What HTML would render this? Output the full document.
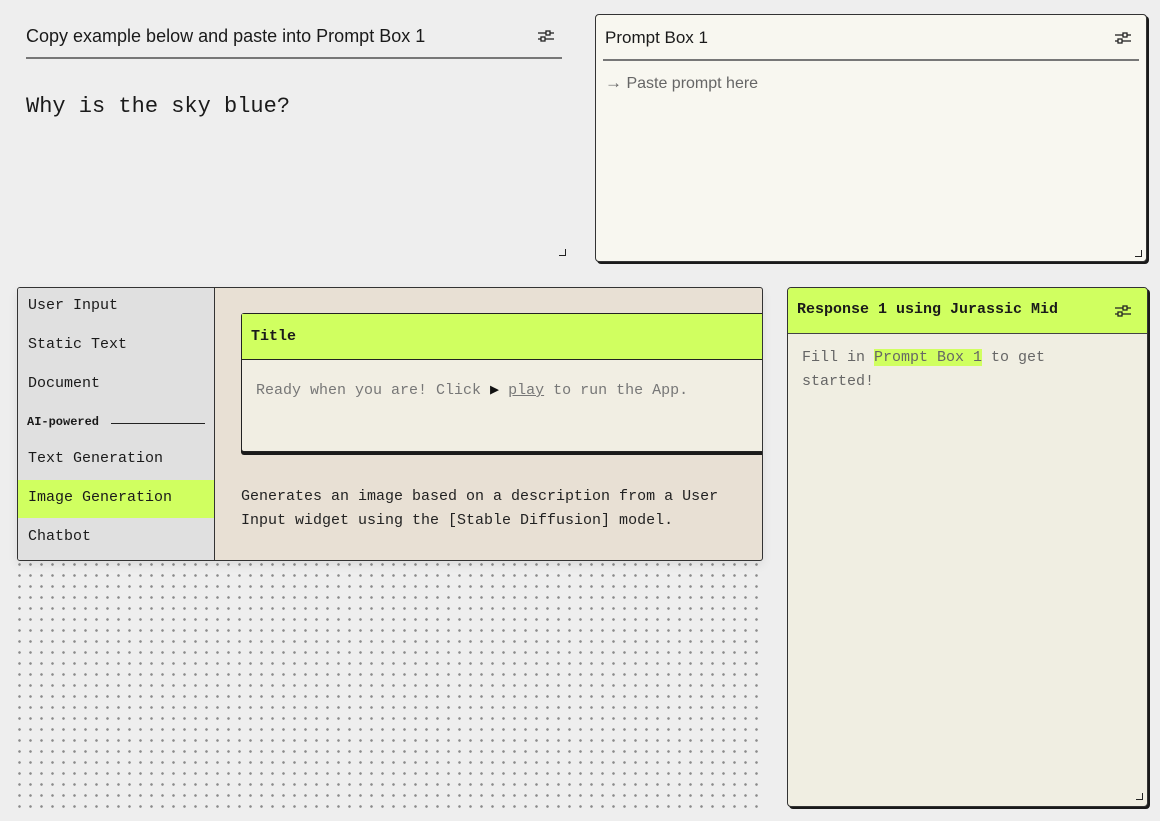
<!DOCTYPE html>
<html><head><meta charset="utf-8"><style>
*{box-sizing:border-box;margin:0;padding:0}
body{width:1160px;height:821px;background:#eeeeee;position:relative;overflow:hidden;font-family:"Liberation Sans",sans-serif;color:#1a1a1a}
.abs{position:absolute}
.mono{font-family:"Liberation Mono",monospace}
.dots{position:absolute;left:14px;top:559px;width:750px;height:250px;background-image:radial-gradient(circle,#8a8a8a 1.1px,transparent 1.5px);background-size:11px 11px;background-position:0 0}
.icon{position:absolute;width:18px;height:14px}
.corner{position:absolute;width:7px;height:7px;border-right:1.5px solid #222;border-bottom:1.5px solid #222}
</style></head><body>
<div class="dots"></div>

<!-- top left -->
<div class="abs" style="left:26px;top:26px;font-size:18px;">Copy example below and paste into Prompt Box 1</div>
<svg class="icon" style="left:537px;top:29px" viewBox="0 0 18 14"><g stroke="#222" stroke-width="1.3" fill="none"><line x1="1" y1="4" x2="17" y2="4"/><line x1="1" y1="10" x2="17" y2="10"/><rect x="9" y="2" width="4" height="4" fill="#eee"/><rect x="4" y="8" width="4" height="4" fill="#eee"/></g></svg>
<div class="abs" style="left:26px;top:57px;width:536px;height:2px;background:#777"></div>
<div class="abs mono" style="left:26px;top:94px;font-size:22px;">Why is the sky blue?</div>
<div class="corner" style="left:559px;top:249px"></div>

<!-- prompt box -->
<div class="abs" style="left:595px;top:14px;width:552px;height:248px;background:#f8f7f0;border:1px solid #333;border-radius:4px;box-shadow:2px 2px 0 #1a1a1a">
 <div class="abs" style="left:9px;top:13px;font-size:17px;">Prompt Box 1</div>
 <svg class="icon" style="left:518px;top:16px" viewBox="0 0 18 14"><g stroke="#222" stroke-width="1.3" fill="none"><line x1="1" y1="4" x2="17" y2="4"/><line x1="1" y1="10" x2="17" y2="10"/><rect x="9" y="2" width="4" height="4" fill="#f8f7f0"/><rect x="4" y="8" width="4" height="4" fill="#f8f7f0"/></g></svg>
 <div class="abs" style="left:7px;top:44px;width:536px;height:2px;background:#777"></div>
 <div class="abs" style="left:9px;top:58px;font-size:16px;color:#666"><span style="font-size:17px">→</span> Paste prompt here</div>
 <div class="corner" style="left:539px;top:235px"></div>
</div>

<!-- bottom left panel -->
<div class="abs" style="left:17px;top:287px;width:746px;height:274px;background:#e8e0d4;border:1px solid #333;border-radius:3px;overflow:hidden;box-shadow:0 4px 10px rgba(0,0,0,.08)">
 <div class="abs mono" style="left:0;top:0;width:197px;height:272px;background:#e0e0e0;border-right:1px solid #333;font-size:15px">
  <div class="abs" style="left:10px;top:9px">User Input</div>
  <div class="abs" style="left:10px;top:48px">Static Text</div>
  <div class="abs" style="left:10px;top:87px">Document</div>
  <div class="abs" style="left:9px;top:127px;font-size:12px;font-weight:bold">AI-powered</div>
  <div class="abs" style="left:93px;top:135px;width:94px;height:1px;background:#222"></div>
  <div class="abs" style="left:10px;top:162px">Text Generation</div>
  <div class="abs" style="left:0;top:192px;width:196px;height:38px;background:#d0ff60"></div>
  <div class="abs" style="left:10px;top:201px">Image Generation</div>
  <div class="abs" style="left:10px;top:240px">Chatbot</div>
 </div>
 <div class="abs" style="left:223px;top:25px;width:540px;height:139px;background:#f1eee3;border:1px solid #222;border-radius:3px;box-shadow:0 3px 0 #1a1a1a">
  <div class="abs mono" style="left:0;top:0;width:100%;height:46px;background:#d0ff60;border-bottom:1px solid #222"></div>
  <div class="abs mono" style="left:9px;top:14px;font-size:15px;font-weight:bold">Title</div>
  <div class="abs mono" style="left:14px;top:66px;font-size:15px;color:#777">Ready when you are! Click <span style="color:#111">▶</span> <u>play</u> to run the App.</div>
 </div>
 <div class="abs mono" style="left:223px;top:197px;font-size:15px;line-height:24px;color:#222">Generates an image based on a description from a User<br>Input widget using the [Stable Diffusion] model.</div>
</div>

<!-- response box -->
<div class="abs" style="left:787px;top:287px;width:361px;height:520px;background:#f0eee2;border:1px solid #333;border-radius:4px;box-shadow:2px 2px 0 #1a1a1a;overflow:hidden">
 <div class="abs" style="left:0;top:0;width:100%;height:46px;background:#d0ff60;border-bottom:1px solid #444"></div>
 <div class="abs mono" style="left:9px;top:13px;font-size:15px;font-weight:bold">Response 1 using Jurassic Mid</div>
 <svg class="icon" style="left:326px;top:16px" viewBox="0 0 18 14"><g stroke="#222" stroke-width="1.3" fill="none"><line x1="1" y1="4" x2="17" y2="4"/><line x1="1" y1="10" x2="17" y2="10"/><rect x="9" y="2" width="4" height="4" fill="#d0ff60"/><rect x="4" y="8" width="4" height="4" fill="#d0ff60"/></g></svg>
 <div class="abs mono" style="left:14px;top:58px;font-size:15px;line-height:24px;color:#666">Fill in <span style="background:#d0ff60">Prompt Box 1</span> to get<br>started!</div>
 <div class="corner" style="left:348px;top:505px"></div>
</div>
</body></html>
